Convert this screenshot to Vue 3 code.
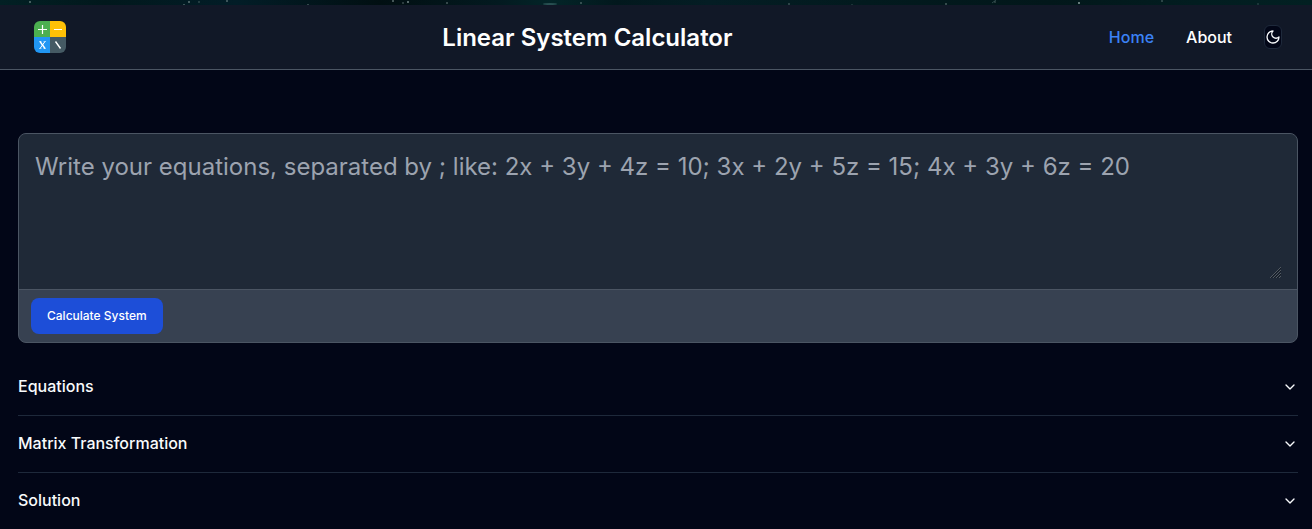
<script setup>
import { ref } from 'vue'

const equations = ref('')
const sections = ['Equations', 'Matrix Transformation', 'Solution']
const stars = [
  [29, 1, 0.4], [183, 4, 0.35], [188, 1, 0.4], [198, 1, 0.2], [226, 0, 0.35],
  [307, 4, 0.3], [392, 0, 0.4], [402, 2, 0.25], [407, 1, 0.5], [446, 2, 0.3],
  [580, 2, 0.3], [788, 3, 0.25], [851, 4, 0.15], [945, 3, 0.3], [994, 1, 0.2],
  [1078, 2, 0.6], [1161, 0, 0.25], [1257, 3, 0.15],
]
</script>

<template>
  <div class="page">
    <svg class="sky" aria-hidden="true">
      <rect v-for="(s, i) in stars" :key="i" :x="s[0]" :y="s[1]" width="2" height="2" fill="#a9bdbb" :opacity="s[2]" />
      <ellipse cx="550" cy="4" rx="7" ry="1" fill="#4e7c7c" opacity="0.5" />
      <path d="M992 3l4-3" stroke="#4e6c6c" opacity="0.6" />
    </svg>
    <header class="nav">
      <a class="logo" href="#" aria-label="Linear System Calculator">
        <svg viewBox="0 0 32 32" width="32" height="32">
          <defs><clipPath id="tile"><rect width="32" height="32" rx="6" /></clipPath></defs>
          <g clip-path="url(#tile)">
            <path fill="#4caf50" d="M0 0h16v16H0z" />
            <path fill="#ffc107" d="M16 0h16v16H16z" />
            <path fill="#2196f3" d="M0 16h16v16H0z" />
            <path fill="#455a64" d="M16 16h16v16H16z" />
          </g>
          <g fill="none" stroke="#fff">
            <path stroke-width="1.2" d="M4 8.500h9M8.500 4v9M20 8.500h8" />
            <path stroke-width="1.4" d="M6 20.500l5 7M21.500 20.500l5 7" />
            <path stroke-width="1" d="M11 20.500l-5 7" />
            <path stroke-width="0.5" d="M5 20.500h2.500M9.500 20.500h2.500M5 27.500h2.500M9.500 27.500h2.500" />
          </g>
        </svg>
      </a>
      <h1>Linear System Calculator</h1>
      <nav class="menu">
        <a class="active" href="#">Home</a>
        <a href="#about">About</a>
        <button class="theme" type="button" aria-label="Toggle theme">
          <svg viewBox="0 0 24 24" width="16" height="16" fill="none" stroke="currentColor" stroke-width="2" stroke-linecap="round" stroke-linejoin="round">
            <path d="M12 3a6 6 0 0 0 9 9 9 9 0 1 1-9-9Z" />
          </svg>
        </button>
      </nav>
    </header>
    <main>
      <form class="editor" @submit.prevent>
        <div class="field">
          <textarea v-model="equations" aria-label="Equations" placeholder="Write your equations, separated by ; like: 2x + 3y + 4z = 10; 3x + 2y + 5z = 15; 4x + 3y + 6z = 20"></textarea>
        </div>
        <div class="actions"><button type="submit">Calculate System</button></div>
      </form>
      <section v-for="name in sections" :key="name" class="item">
        <h3>
          <button type="button" aria-expanded="false">
            <span>{{ name }}</span>
            <svg viewBox="0 0 24 24" width="16" height="16" fill="none" stroke="currentColor" stroke-width="2" stroke-linecap="round" stroke-linejoin="round"><path d="m6 9 6 6 6-6" /></svg>
          </button>
        </h3>
      </section>
    </main>
  </div>
</template>

<style>
html { background: #020617; overflow: hidden; }
body { margin: 0; }
</style>

<style scoped>
.page, .page * { box-sizing: border-box; }
.page { color: #f8fafc; font: 16px/24px Inter, sans-serif; background: #020617; }
.sky {
  display: block;
  width: 100%;
  height: 5px;
  background: linear-gradient(90deg, #022024, #01181c 8%, #021d27 18%, #010f12 29%, #031a20 38%, #032528 42%, #02181d 47%, #041d24 54%, #021a1e 66%, #02171a 80%, #021d20 91%, #022022);
}
.nav {
  display: flex;
  align-items: center;
  justify-content: space-between;
  height: 65px;
  padding: 0 30px 0 34px;
  background: #111827;
  border-bottom: 1px solid #4b5563;
}
.logo { display: block; height: 32px; }
h1 { margin: 0; padding-top: 2px; font-size: 24px; line-height: 32px; font-weight: 600; color: #fff; }
.menu { display: flex; align-items: center; gap: 32px; font-weight: 500; }
.menu a { color: #fff; text-decoration: none; }
.menu a.active { color: #3b82f6; }
button { font: inherit; cursor: pointer; }
.theme {
  display: flex;
  align-items: center;
  justify-content: center;
  width: 18px;
  height: 24px;
  padding: 0;
  color: #f8fafc;
  background: #020617;
  border: 1px solid #1e293b;
  border-radius: 6px;
}
.theme svg { flex: none; }
main { padding: 63px 14px 0 18px; }
.editor {
  margin-bottom: 16px;
  background: #374151;
  border: 1px solid #4b5563;
  border-radius: 8px;
  overflow: hidden;
}
.field { padding: 8px 16px 10px; background: #1f2937; }
textarea {
  display: block;
  width: 100%;
  height: 137px;
  padding: 9px 0 0;
  font: 24px/32px Inter, sans-serif;
  color: #fff;
  background: #1f2937;
  border: 0;
  outline: 0;
  resize: vertical;
}
textarea::placeholder { color: #9ca3af; opacity: 1; }
textarea::-webkit-resizer {
  background: url("data:image/svg+xml,%3Csvg xmlns='http://www.w3.org/2000/svg' width='15' height='15'%3E%3Cpath d='M4 14L15 3M7 14L15 6M10 14L15 9M13 14L15 12' stroke='%23586069' stroke-width='.9'/%3E%3Cpath d='M5 14L15 4M8 14L15 7M11 14L15 10' stroke='%2310151d' stroke-width='.7'/%3E%3C/svg%3E") no-repeat right bottom;
}
.actions { padding: 8px 12px; border-top: 1px solid #4b5563; }
.actions button {
  display: block;
  padding: 10px 16px;
  font-size: 12px;
  line-height: 16px;
  font-weight: 500;
  color: #fff;
  background: #1d4ed8;
  border: 0;
  border-radius: 8px;
}
.item { border-bottom: 1px solid #1e293b; }
h3 { margin: 0; font-size: 16px; font-weight: 500; }
.item button {
  display: flex;
  align-items: center;
  justify-content: space-between;
  width: 100%;
  height: 56px;
  padding: 0;
  color: #f8fafc;
  text-align: left;
  background: none;
  border: 0;
}
.item span { padding-bottom: 2px; }
</style>
